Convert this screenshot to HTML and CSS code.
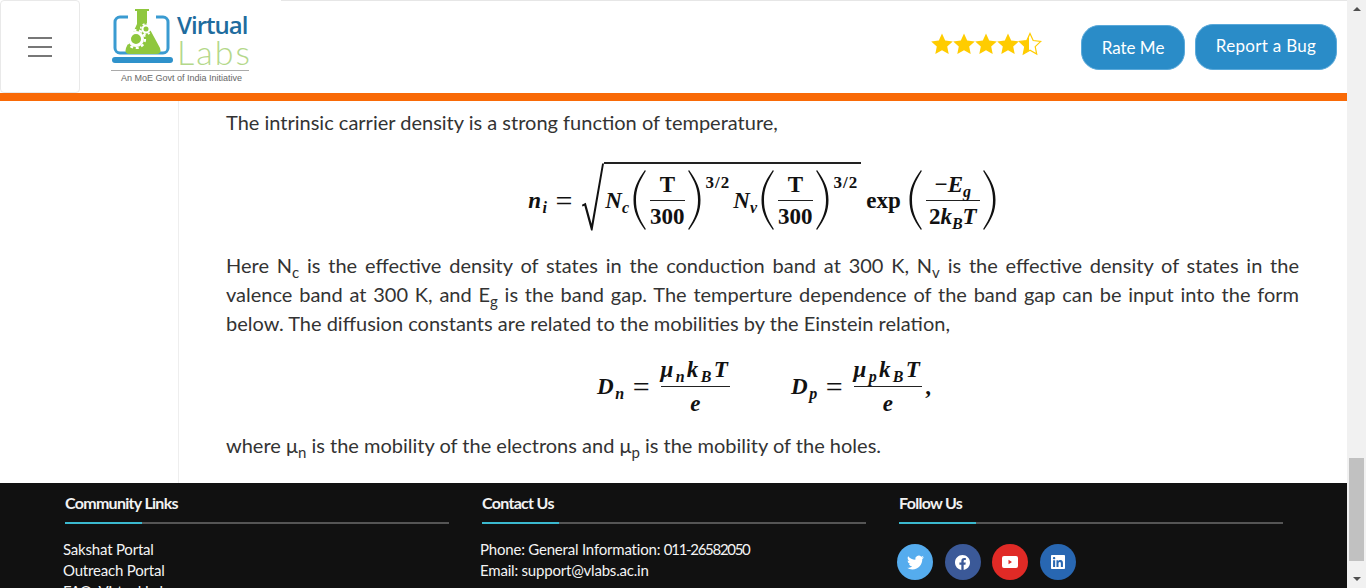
FILE: index.html
```html
<!DOCTYPE html>
<html lang="en">
<head>
    <meta charset="UTF-8">
    <title>Virtual Labs - Theory</title>
    <link rel="stylesheet" href="styles.css">
</head>
<body>
    <svg class="defs" width="0" height="0">
        <symbol id="paren" viewBox="0 0 14 62">
            <path d="M13 1C5 12 1.500 20 1.500 31S5 50 13 61L13.800 60C7 49 4 42 4 31S7 13 13.800 2Z"/>
        </symbol>
        <symbol id="star" viewBox="0 0 24 24">
            <path d="M12 1.500l3.200 7 7.600.9-5.600 5.200 1.500 7.500L12 18.300l-6.700 3.800 1.500-7.500L1.200 9.400l7.600-.9z"/>
        </symbol>
    </svg>

    <div class="window">
        <div class="viewport">
            <!-- Header -->
            <header class="site-header">
                <button class="menu-btn" aria-label="Menu">
                    <span></span><span></span><span></span>
                </button>
                <a class="logo" href="#">
                    <div class="logo-top">
                        <svg class="logo-mark" width="64" height="58" viewBox="0 0 64 58">
                            <path d="M17 8H9a5 5 0 0 0-5 5v26a5 5 0 0 0 5 5h43a5 5 0 0 0 5-5V13a5 5 0 0 0-5-5h-7" fill="none" stroke="#3a9bd1" stroke-width="3"/>
                            <rect x="1" y="48" width="61" height="6" rx="3" fill="#2f92cb"/>
                            <path d="M24 0h14v2h-2v13l13 24q2 6-4 6H19q-6 0-4-6l11-24V2h-2z" fill="#8fc73e"/>
                            <circle cx="25" cy="30" r="6.500" fill="none" stroke="#fff" stroke-width="3"/>
                            <circle cx="25" cy="30" r="9" fill="none" stroke="#fff" stroke-width="2.200" stroke-dasharray="3 2.650"/>
                            <circle cx="35" cy="20" r="3.500" fill="none" stroke="#fff" stroke-width="2"/>
                            <circle cx="35" cy="20" r="5.300" fill="none" stroke="#fff" stroke-width="1.600" stroke-dasharray="2 2.160"/>
                        </svg>
                        <div class="logo-words">
                            <span class="logo-virtual">Virtual</span>
                            <span class="logo-labs">Labs</span>
                        </div>
                    </div>
                    <div class="logo-tag">An MoE Govt of India Initiative</div>
                </a>
                <div class="header-actions">
                    <div class="stars">
                        <svg class="star"><use href="#star"/></svg>
                        <svg class="star"><use href="#star"/></svg>
                        <svg class="star"><use href="#star"/></svg>
                        <svg class="star"><use href="#star"/></svg>
                        <div class="star-half">
                            <svg class="star star-empty"><use href="#star"/></svg>
                            <div class="star-half-fill"><svg class="star"><use href="#star"/></svg></div>
                        </div>
                    </div>
                    <a class="pill-btn pill-rate" href="#">Rate Me</a>
                    <a class="pill-btn pill-bug" href="#">Report a Bug</a>
                </div>
            </header>

            <!-- Article -->
            <main class="layout">
                <aside class="sidebar"></aside>
                <article class="content">
                    <p>The intrinsic carrier density is a strong function of temperature,</p>

                    <div class="formula formula-ni">
                        <span class="mi mi-n">n<sub>i</sub></span>
                        <span class="eq">=</span>
                        <svg class="radical" width="23" height="72" viewBox="0 0 24 72"><path d="M1 44l4-2 6 22L22 1h2L12 71h-1.500L3.500 45 1.500 46z"/></svg>
                        <span class="radicand">
                            <span class="mi mi-big">N<sub>c</sub></span>
                            <svg class="paren"><use href="#paren"/></svg>
                            <span class="frac"><span class="num">T</span><span class="den">300</span></span>
                            <svg class="paren flip"><use href="#paren"/></svg>
                            <span class="power">3/2</span>
                            <span class="mi mi-big">N<sub>v</sub></span>
                            <svg class="paren"><use href="#paren"/></svg>
                            <span class="frac"><span class="num">T</span><span class="den">300</span></span>
                            <svg class="paren flip"><use href="#paren"/></svg>
                            <span class="power">3/2</span>
                        </span>
                        <span class="fn">exp</span>
                        <svg class="paren"><use href="#paren"/></svg>
                        <span class="frac frac-wide"><span class="num">&minus;<i>E<sub>g</sub></i></span><span class="den">2<i>k<sub>B</sub>T</i></span></span>
                        <svg class="paren flip"><use href="#paren"/></svg>
                    </div>

                    <p>Here N<sub>c</sub> is the effective density of states in the conduction band at 300 K, N<sub>v</sub> is the effective density of states in the valence band at 300 K, and E<sub>g</sub> is the band gap. The temperture dependence of the band gap can be input into the form below. The diffusion constants are related to the mobilities by the Einstein relation,</p>

                    <div class="formula formula-d">
                        <span class="mi mi-d">D<sub>n</sub></span>
                        <span class="eq">=</span>
                        <span class="frac frac-d"><span class="num"><i>&mu;<sub>n</sub>k<sub>B</sub>T</i></span><span class="den"><i>e</i></span></span>
                        <span class="formula-gap"></span>
                        <span class="mi mi-d">D<sub>p</sub></span>
                        <span class="eq">=</span>
                        <span class="frac frac-d"><span class="num"><i>&mu;<sub>p</sub>k<sub>B</sub>T</i></span><span class="den"><i>e</i></span></span>
                        <span class="comma">,</span>
                    </div>

                    <p>where &mu;<sub>n</sub> is the mobility of the electrons and &mu;<sub>p</sub> is the mobility of the holes.</p>
                </article>
            </main>

            <!-- Footer -->
            <footer class="site-footer">
                <section class="foot-col">
                    <h4>Community Links</h4>
                    <ul>
                        <li>Sakshat Portal</li>
                        <li>Outreach Portal</li>
                        <li>FAQ: Virtual Labs</li>
                    </ul>
                </section>
                <section class="foot-col">
                    <h4>Contact Us</h4>
                    <ul>
                        <li>Phone: General Information: <span class="digits">011-26582050</span></li>
                        <li>Email: support@vlabs.ac.in</li>
                    </ul>
                </section>
                <section class="foot-col">
                    <h4>Follow Us</h4>
                    <div class="socials">
                        <a class="social social-tw" href="#">
                            <svg width="17" height="17" viewBox="0 0 24 24"><path d="M23.953 4.570a10 10 0 01-2.825.775 4.958 4.958 0 002.163-2.723c-.951.555-2.005.959-3.127 1.184a4.920 4.920 0 00-8.384 4.482C7.690 8.095 4.067 6.130 1.640 3.162a4.822 4.822 0 00-.666 2.475c0 1.710.870 3.213 2.188 4.096a4.904 4.904 0 01-2.228-.616v.060a4.923 4.923 0 003.946 4.827 4.996 4.996 0 01-2.212.085 4.936 4.936 0 004.604 3.417 9.867 9.867 0 01-6.102 2.105c-.390 0-.779-.023-1.170-.067a13.995 13.995 0 007.557 2.209c9.053 0 13.998-7.496 13.998-13.985 0-.210 0-.420-.015-.630A9.935 9.935 0 0024 4.590z"/></svg>
                        </a>
                        <a class="social social-fb" href="#">
                            <svg width="15" height="15" viewBox="0 0 24 24"><path d="M24 12.073c0-6.627-5.373-12-12-12s-12 5.373-12 12c0 5.990 4.388 10.954 10.125 11.854v-8.385H7.078v-3.470h3.047V9.430c0-3.007 1.792-4.669 4.533-4.669 1.312 0 2.686.235 2.686.235v2.953H15.830c-1.491 0-1.956.925-1.956 1.874v2.250h3.328l-.532 3.470h-2.796v8.385C19.612 23.027 24 18.062 24 12.073z"/></svg>
                        </a>
                        <a class="social social-yt" href="#">
                            <svg width="16" height="12" viewBox="0 0 16 12"><path fill-rule="evenodd" d="M2 0h12a2 2 0 0 1 2 2v8a2 2 0 0 1-2 2H2a2 2 0 0 1-2-2V2a2 2 0 0 1 2-2zM6.500 3.800v4.400L10 6z"/></svg>
                        </a>
                        <a class="social social-in" href="#">
                            <svg width="14" height="14" viewBox="0 0 24 24"><path d="M20.447 20.452h-3.554v-5.569c0-1.328-.027-3.037-1.852-3.037-1.853 0-2.136 1.445-2.136 2.939v5.667H9.351V9h3.414v1.561h.046c.477-.900 1.637-1.850 3.370-1.850 3.601 0 4.267 2.370 4.267 5.455v6.286zM5.337 7.433c-1.144 0-2.063-.926-2.063-2.065 0-1.138.920-2.063 2.063-2.063 1.140 0 2.064.925 2.064 2.063 0 1.139-.925 2.065-2.064 2.065zm1.782 13.019H3.555V9h3.564v11.452zM22.225 0H1.771C.792 0 0 .774 0 1.729v20.542C0 23.227.792 24 1.771 24h20.451C23.200 24 24 23.227 24 22.271V1.729C24 .774 23.200 0 22.222 0h.003z"/></svg>
                        </a>
                    </div>
                </section>
            </footer>
        </div>

        <!-- Page scrollbar -->
        <div class="scrollbar">
            <span class="arrow arrow-up"></span>
            <div class="track"><div class="thumb"></div></div>
            <span class="arrow arrow-down"></span>
        </div>
    </div>
</body>
</html>
```

FILE: styles.css
```css
/* Global Styles */
html, body {
    margin: 0;
    padding: 0;
    height: 588px;
    overflow: hidden;
    background-color: #fff;
}

body {
    font-family: Lato, 'Open Sans', sans-serif;
    color: #333;
}

a {
    text-decoration: none;
}

.defs {
    display: block;
    height: 0;
}

.window {
    display: flex;
    height: 588px;
}

.viewport {
    flex: 1;
    min-width: 0;
    height: 588px;
    overflow: hidden;
}

/* Header */
.site-header {
    display: flex;
    align-items: stretch;
    height: 93px;
    border-bottom: 8px solid #f96a07;
}

.menu-btn {
    display: flex;
    flex-direction: column;
    justify-content: center;
    align-items: center;
    gap: 7px;
    width: 80px;
    height: 93px;
    padding: 0;
    background: #fff;
    border: 1px solid #e9e9e9;
    border-radius: 4px;
}

.menu-btn span {
    display: block;
    width: 24px;
    height: 2px;
    background-color: #777;
}

.logo {
    display: block;
    width: 201px;
    padding: 8px 0 0 31px;
    box-sizing: border-box;
}

.logo-top {
    display: flex;
    gap: 2px;
    width: 138px;
    height: 62px;
    border-bottom: 1px solid #aaa;
}

.logo-mark {
    margin-top: 1px;
    flex: none;
}

.logo-words {
    display: flex;
    flex-direction: column;
    margin-top: 4px;
}

.logo-virtual {
    font-family: 'Open Sans', sans-serif;
    font-weight: 600;
    font-size: 24px;
    line-height: 26px;
    letter-spacing: -1px;
    color: #1f6c9e;
}

.logo-labs {
    font-family: Lato, sans-serif;
    font-weight: 300;
    font-size: 34px;
    line-height: 27px;
    letter-spacing: 2px;
    color: #b4d88a;
}

.logo-tag {
    margin-top: 2px;
    padding-left: 10px;
    font-family: 'Liberation Sans', sans-serif;
    font-size: 9px;
    line-height: 11px;
    color: #666;
}

.header-actions {
    flex: 1;
    display: flex;
    align-items: flex-start;
    border-top: 1px solid #e6e6e6;
}

.stars {
    display: flex;
    margin: 31px 39px 0 649px;
}

.star {
    display: block;
    width: 24px;
    height: 24px;
    margin-right: -2px;
    fill: #fc0;
}

.star-half {
    position: relative;
    width: 24px;
    height: 24px;
}

.star-empty {
    fill: #fff;
    stroke: #fc0;
    stroke-width: 1.200;
}

.star-half-fill {
    position: absolute;
    left: 0;
    top: 0;
    width: 11px;
    height: 24px;
    overflow: hidden;
}

.pill-btn {
    display: flex;
    align-items: center;
    justify-content: center;
    background-color: #2a8cc8;
    color: #fff;
    font-size: 17px;
    border: 1px solid #5aa9da;
    box-sizing: border-box;
}

.pill-rate {
    width: 104px;
    height: 45px;
    margin-top: 24px;
    padding-bottom: 1px;
    border-radius: 18px;
}

.pill-bug {
    width: 142px;
    height: 46px;
    margin: 23px 0 0 10px;
    padding-bottom: 3px;
    letter-spacing: 0.3px;
    border-radius: 18px;
}

/* Article */
.layout {
    display: flex;
    height: 382px;
    overflow: hidden;
}

.sidebar {
    width: 178px;
    flex: none;
    border-right: 1px solid #eee;
}

.content {
    flex: 1;
    min-width: 0;
    padding: 7px 48px 0 47px;
    font-size: 20px;
    line-height: 29px;
    color: #333;
}

.content p {
    margin: 0;
    text-align: justify;
}

.content sub {
    font-size: 15px;
    line-height: 0;
}

/* Formulas */
.formula {
    display: flex;
    justify-content: center;
    align-items: center;
    font-family: 'Liberation Serif', serif;
    font-weight: 700;
    font-size: 23px;
    line-height: 1;
    color: #111;
}

.formula sub {
    font-size: 16px;
    line-height: 0;
    vertical-align: -5px;
}

.formula-ni {
    height: 74px;
    margin: 22px 0 18px;
    box-sizing: border-box;
}

.formula-ni > .mi,
.formula-ni > .eq,
.formula-ni > .fn,
.formula-ni > .paren,
.formula-ni > .frac {
    margin-top: 8px;
}

.formula-ni > .eq {
    margin-right: 9px;
}

.formula-d {
    height: 56px;
    margin: 20px 0 17px;
    padding-left: 3px;
}

.mi, .frac i {
    font-style: italic;
}

.mi-n {
    letter-spacing: 1.500px;
}

.mi-big {
    margin: 0 3px 0 1px;
}

.mi-d {
    letter-spacing: 1.500px;
}

.eq {
    margin: 0 7px;
    font-weight: 400;
    font-size: 30px;
    line-height: 23px;
}

.radical {
    flex: none;
    margin-top: 1px;
    fill: #111;
}

.radicand {
    display: flex;
    align-items: center;
    height: 70px;
    margin-top: 2px;
    padding: 4px 1px 0 0;
    border-top: 2px solid #222;
    box-sizing: border-box;
}

.paren {
    flex: none;
    width: 14px;
    height: 62px;
    fill: #111;
}

.paren.flip {
    transform: scaleX(-1);
}

.frac {
    display: flex;
    flex-direction: column;
    align-items: center;
    margin: 0 3px 0 4px;
}

.frac .num {
    padding: 0 0 4px;
    border-bottom: 1px solid #222;
    align-self: stretch;
    text-align: center;
}

.frac .den {
    padding-top: 4px;
}

.frac-wide {
    min-width: 54px;
}

.power {
    align-self: flex-start;
    margin: 6px 2px 0 4px;
    font-size: 17px;
    letter-spacing: 1px;
}

.fn {
    margin: 0 7px 0 5px;
}

.frac-d {
    margin: 0 0 0 4px;
}

.frac-d .num {
    padding: 0 0 5px;
    letter-spacing: 2.300px;
}

.frac-d .den {
    padding-top: 5px;
}

.formula-gap {
    width: 61px;
}

.comma {
    margin-left: 3px;
}

/* Footer */
.site-footer {
    display: flex;
    gap: 33px;
    height: 105px;
    padding: 0 0 0 65px;
    background-color: #111;
    color: #fff;
    overflow: hidden;
}

.foot-col {
    width: 384px;
    flex: none;
}

.foot-col h4 {
    position: relative;
    margin: 0;
    height: 41px;
    padding-top: 10px;
    box-sizing: border-box;
    font-size: 16px;
    line-height: 20px;
    font-weight: 700;
    letter-spacing: -0.7px;
    color: #f2f2f2;
    border-bottom: 2px solid #555;
}

.foot-col h4::after {
    content: "";
    position: absolute;
    left: 0;
    bottom: -2px;
    width: 77px;
    height: 2px;
    background-color: #3bb9cf;
}

.foot-col ul {
    list-style: none;
    margin: 15px 0 0 -2px;
    padding: 0;
    font-size: 15px;
    line-height: 21px;
    letter-spacing: -0.2px;
    color: #f4f4f4;
}

.digits {
    letter-spacing: -1.300px;
}

.socials {
    display: flex;
    gap: 11.500px;
    margin: 20px 0 0 -2px;
}

.social {
    display: flex;
    align-items: center;
    justify-content: center;
    width: 36px;
    height: 36px;
    border-radius: 50%;
}

.social svg {
    fill: #fff;
}

.social-tw { background-color: #55acee; }
.social-fb { background-color: #3b5998; }
.social-yt { background-color: #e02a26; }
.social-in { background-color: #2867b2; }

/* Scrollbar */
.scrollbar {
    flex: none;
    display: flex;
    flex-direction: column;
    align-items: center;
    width: 19px;
    height: 588px;
    background-color: #f1f1f1;
}

.arrow {
    flex: none;
    width: 0;
    height: 0;
    margin: 7px 0;
    border-left: 4px solid transparent;
    border-right: 4px solid transparent;
}

.arrow-up {
    border-bottom: 4px solid #505050;
}

.arrow-down {
    border-top: 4px solid #505050;
}

.track {
    flex: 1;
    width: 100%;
    display: flex;
    justify-content: center;
}

.thumb {
    width: 15px;
    height: 103px;
    margin-top: 440px;
    background-color: #c1c1c1;
}
```
